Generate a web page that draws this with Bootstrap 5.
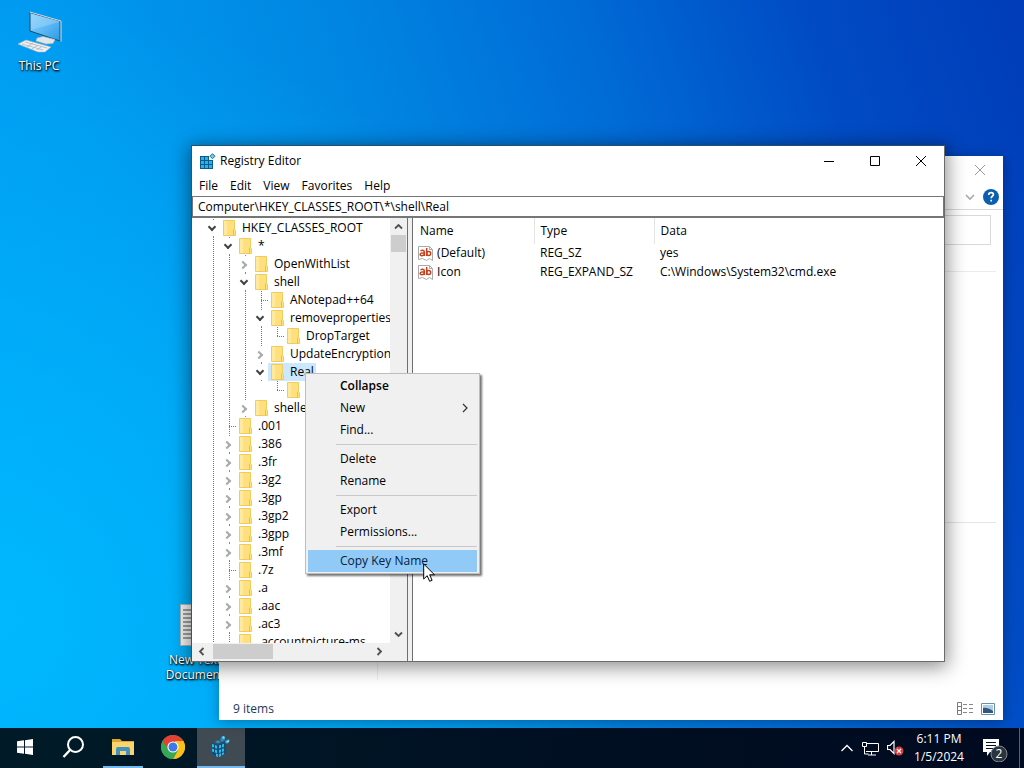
<!DOCTYPE html>
<html lang="en">
<head>
<meta charset="utf-8">
<meta name="viewport" content="width=device-width, initial-scale=1">
<title>Registry Editor</title>
<link href="https://cdn.jsdelivr.net/npm/bootstrap@5.3.0/dist/css/bootstrap.min.css" rel="stylesheet">
<style>
body{font:12px/18px "Open Sans","Noto Sans",sans-serif;color:#000;cursor:default}
button,input,table{font:inherit}
.desktop{background:
  radial-gradient(ellipse 62% 85% at 0% 85%,rgba(0,190,255,.8),rgba(0,180,255,0)),
  linear-gradient(72deg,#00a2f8 0%,#009af0 22%,#0086e2 45%,#006cd6 64%,#004cc4 82%,#003cb8 100%)}
.flatbtn{border:0;background:none;padding:0;color:inherit;display:flex;align-items:center;justify-content:center}
.shortcut{width:76px;color:#fff;text-shadow:0 1px 2px #000,1px 1px 2px #000;text-align:center;line-height:15px;text-decoration:none;display:flex;flex-direction:column;align-items:center;position:absolute}
.shortcut-pc{left:1px;top:10px}
.shortcut-doc{left:157px;top:602px}
.win{position:absolute;background:#fff;display:flex;flex-direction:column}
.win-explorer{left:219px;right:21px;top:156px;bottom:8px;box-shadow:0 2px 12px rgba(0,0,0,.3)}
.win-regedit{left:191px;right:79px;top:145px;bottom:66px;border:1px solid #6b6b6b;border-top-color:#24506f;border-left-color:#1c5a8a;box-shadow:0 3px 18px 2px rgba(0,0,0,.45)}
.ex-ribbon{height:26px;border-bottom:1px solid #d9d9d9}
.ex-address{height:62px;border-bottom:1px solid #ebebeb;margin-right:7px}
.ex-address input{width:180px;height:30px;border:1px solid #d9d9d9;margin:5px 5px 0 0;outline:0}
.ex-files{height:251px;border-bottom:1px solid #e5e5e5;margin-right:7px}
.ex-nav{width:159px;border-right:1px solid #f0f0f0}
.ex-status{height:24px;color:#1e395b;padding:1px 8px 0 14px}
.titlebar{height:28px}
.win-regedit .titlebar{height:30px}
.caption-btn{width:46px;height:28px}
.menubar{height:21px;padding-left:1px}
.menubar .flatbtn{padding:0 6px}
.addressbar{height:22px;border:2px solid #767676;border-width:1px 1px 2px;padding:0 5px;outline:0;width:100%}
.tree-pane{width:215px;background:#f0f0f0}
.tree{width:198px;background:#fff;overflow:hidden;list-style:none;margin:0;padding:1px 0 0 12px}
.tree li{display:flex;height:18px;white-space:nowrap}
.tree li>i{flex:none;width:16px;height:18px;position:relative}
.line{background:repeating-linear-gradient(#777 0 1px,transparent 1px 2px) 9px 0/1px 18px no-repeat}
.tee{background:repeating-linear-gradient(#777 0 1px,transparent 1px 2px) 9px 0/1px 18px no-repeat,repeating-linear-gradient(90deg,#777 0 1px,transparent 1px 2px) 9px 9px/7px 1px no-repeat}
.elbow{background:repeating-linear-gradient(#777 0 1px,transparent 1px 2px) 9px 0/1px 10px no-repeat,repeating-linear-gradient(90deg,#777 0 1px,transparent 1px 2px) 9px 9px/7px 1px no-repeat}
.opened,.closed{background:linear-gradient(#888,#888) 9px 0/1px 1px no-repeat,linear-gradient(#888,#888) 9px 17px/1px 1px no-repeat}
.opened::after,.closed::after{content:"";position:absolute;width:6px;height:6px;border:solid #444;border-width:0 2px 2px 0}
.opened::after{left:5px;top:5px;transform:rotate(45deg)}
.closed::after{left:4px;top:7px;transform:rotate(-45deg);border-color:#a8a8a8}
.key{display:flex;padding-right:2px}
.key svg{flex:none;width:16px;height:18px;margin-right:6px}
.key.picked{background:#cce8ff}
.vscroll{width:17px}
.vscroll .thumb{width:15px;height:17px;background:#cdcdcd}
.hscroll{height:17px;margin-bottom:1px}
.hscroll .thumb{width:60px;height:15px;background:#cdcdcd}
.arrow{width:17px;height:17px;flex:none}
.splitter{width:6px;background:#f0f0f0;border:solid #6f6f6f;border-width:0 1px}
.values{table-layout:fixed;width:100%}
.values th{font-weight:400;height:26px;padding:0 6px;border-right:1px solid #e5e5e5}
.values th:first-child{padding-left:7px}
.values th:last-child{border:0}
.values td{height:19px;padding:0 6px;white-space:nowrap}
.values td:first-child{padding-left:5px}
.ctx{position:absolute;left:113px;top:227px;width:175px;background:#f0f0f0;border:1px solid #bdbdbd;padding:1px 2px;box-shadow:2px 2px 2px rgba(0,0,0,.55)}
.ctx .entry{width:100%;height:22px;padding:0 6px 0 32px;justify-content:space-between}
.ctx hr{margin:3px 0 3px 28px;border-top:1px solid #c9c9c9;opacity:1}
.ctx .entry.hot{background:#91c9f7;color:#04213e}
.pointer{position:absolute;left:117px;top:189px}
.taskbar{height:40px;background:linear-gradient(90deg,#001b28,#000f22 60%,#000a20);color:#fff}
.task{width:49px;height:40px;border-bottom:2px solid transparent}
.task.running{width:40px;margin:0 5px;border-color:#76b9ed}
.task.current{width:48px;background:#404a53;border-color:#76b9ed}
.clock{width:54px;text-align:center}
.peek{width:5px;height:40px;border-left:1px solid #56606c;margin-left:10px}
</style>
</head>
<body>
<svg width="0" height="0" class="position-absolute" aria-hidden="true">
 <symbol id="folder" viewBox="0 0 16 18"><path d="M3.500 1.500h11v9l1 1v5h-12z" fill="#ffe07c" stroke="#f0cc5c"/><path d="M13.500 10.500v6" stroke="#e8c04a" fill="none"/><path d="M4 2h3v14H4z" fill="#ffe99c"/></symbol>
 <symbol id="textvalue" viewBox="0 0 16 17"><path d="M.5 1.500h11l3 3v11l-3-2-3 2-4-2-4 1z" fill="#fff" stroke="#aaa"/><path d="M11.500 1.500v3h3" fill="none" stroke="#aaa"/><g fill="none" stroke="#c8401d" stroke-width="1.500"><path d="M2.500 5.700q3.800-1.200 3.800 1.300v4M6.300 8Q2.200 7.500 2.200 9.400c0 2 3 1.700 4.100 0M8.700 3v8"/><circle cx="10.700" cy="8.500" r="2"/></g></symbol>
 <symbol id="up" viewBox="0 0 17 17"><path d="M5 10.500 8.500 7 12 10.500" fill="none" stroke="#505050" stroke-width="1.800"/></symbol>
 <symbol id="down" viewBox="0 0 17 17"><path d="M5 6.500 8.500 10 12 6.500" fill="none" stroke="#505050" stroke-width="1.800"/></symbol>
 <symbol id="left" viewBox="0 0 17 17"><path d="M11.500 5 8 8.500l3.500 3.500" fill="none" stroke="#505050" stroke-width="1.800"/></symbol>
 <symbol id="right" viewBox="0 0 17 17"><path d="M7.500 5 11 8.500 7.500 12" fill="none" stroke="#505050" stroke-width="1.800"/></symbol>
</svg>
<div class="vh-100 d-flex flex-column overflow-hidden">
<main class="desktop flex-grow-1 position-relative">
 <a href="#" class="shortcut shortcut-pc">
  <svg width="46" height="48" viewBox="0 0 46 48"><defs><linearGradient id="scr" x2="1" y2="1"><stop stop-color="#8ad1fb"/><stop offset=".5" stop-color="#61b9f4"/><stop offset="1" stop-color="#289be9"/></linearGradient></defs><path d="M14 2.500 44 11v20L14 21z" fill="url(#scr)" stroke="#234b6b"/><path d="M14 2 45 11v20.500" fill="none" stroke="#d4dde2"/><path d="m15 20 28-8v-1L15 4z" fill="#b4e1fd" opacity=".35"/><path d="m21 28 6-1.500 12 3-2 4-7 .5-10-3z" fill="#dfe7ea" stroke="#a2b3bd" stroke-width=".6"/><path d="m2 34 8-4 25 7-6 5-7 0z" fill="#eef1f2" stroke="#aab6bf" stroke-width=".6"/><path d="m6 34 21 6m-18-8 22 6M11 37l6-4m-1 6 6-4m-1 5 5-4" stroke="#aab4ba" stroke-width=".8"/></svg>
  <span>This PC</span></a>
 <a href="#" class="shortcut shortcut-doc">
  <svg width="34" height="50" viewBox="0 0 34 50"><path d="M2.500 2.500h27v41h-27z" fill="#f6f6f6" stroke="#b5b5b5"/><path d="M5 8h21M5 12h21M5 16h21M5 20h21M5 24h21M5 28h21M5 32h21M5 36h21" stroke="#858585" stroke-width="1.300"/></svg>
  <span>New Text Document</span></a>

 <section class="win win-explorer" aria-label="File Explorer">
  <div class="titlebar d-flex justify-content-end"><button class="flatbtn caption-btn" aria-label="Close folder"><svg width="12" height="12"><path d="m1 1 10 10M11 1 1 11" stroke="#999"/></svg></button></div>
  <div class="ex-ribbon d-flex justify-content-end align-items-center pe-1 gap-2">
   <button class="flatbtn" aria-label="Expand ribbon"><svg width="10" height="8"><path d="m1 2 4 4 4-4" fill="none" stroke="#aaa" stroke-width="1.600"/></svg></button>
   <button class="flatbtn" aria-label="Help"><svg width="16" height="16" viewBox="0 0 16 16"><circle cx="8" cy="8" r="8" fill="#0c5fae"/><path d="M5.700 6Q5.800 3.700 8.100 3.700q2.300 0 2.300 1.900c0 1.600-2.200 1.700-2.200 3.700M8.200 10.700v1.800" fill="none" stroke="#fff" stroke-width="1.700"/></svg></button>
  </div>
  <div class="ex-address d-flex justify-content-end"><input type="text" aria-label="Search folder"></div>
  <div class="ex-files"></div>
  <div class="flex-grow-1 d-flex flex-column"><div class="ex-nav flex-grow-1 mb-3"></div></div>
  <div class="ex-status d-flex align-items-center justify-content-between"><span>9 items</span>
   <span class="d-flex gap-2"><button class="flatbtn" aria-label="Details view"><svg width="16" height="13"><path d="M.5.500h4v12h-4zM1 4.500h3M1 8.500h3" fill="none" stroke="#7c7c7c"/><path d="M6 2.500h10M6 6.500h10M6 10.500h10" stroke="#888" stroke-dasharray="4 2"/></svg></button>
   <button class="flatbtn" aria-label="Large icons view"><svg width="14" height="12"><path d="M.5.500h13v11H.500z" fill="#fff" stroke="#6a8fab"/><path d="M2 2h10v8H2z" fill="#a8d0ec"/><path d="M2 5q4-1 10 3v2H2z" fill="#31587a"/></svg></button></span>
  </div>
 </section>

 <section class="win win-regedit" aria-label="Registry Editor">
  <header class="titlebar d-flex align-items-center ps-2">
   <svg width="16" height="16" viewBox="0 0 16 16"><path d="M0 3h13v13H0z" fill="#0b5c8c"/><path d="M1 4h3v3H1zM5 4h3v3H5zM1 8h3v3H1zM5 8h3v3H5zM9 8h3v3H9zM1 12h3v3H1zM5 12h3v3H5zM9 12h3v3H9z" fill="#27b4e8"/><path d="M9 3h4v4H9z" fill="#fff"/><path d="m12.500.700 2.500 2.500-2.500 2.500L10 3.200z" fill="#68cdf0" stroke="#18719f"/></svg>
   <span class="flex-grow-1 ps-1">Registry Editor</span>
   <button class="flatbtn caption-btn" aria-label="Minimize"><svg width="12" height="12"><path d="M1 6.500h10" stroke="#000"/></svg></button>
   <button class="flatbtn caption-btn" aria-label="Maximize"><svg width="12" height="12"><path d="M1.500 1.500h9v9h-9z" fill="none" stroke="#000"/></svg></button>
   <button class="flatbtn caption-btn" aria-label="Close"><svg width="12" height="12"><path d="m1 1 10 10M11 1 1 11" stroke="#000"/></svg></button>
  </header>
  <nav class="menubar d-flex"><button class="flatbtn">File</button><button class="flatbtn">Edit</button><button class="flatbtn">View</button><button class="flatbtn">Favorites</button><button class="flatbtn">Help</button></nav>
  <input class="addressbar" type="text" aria-label="Key path" value="Computer\HKEY_CLASSES_ROOT\*\shell\Real">
  <div class="flex-grow-1 d-flex overflow-hidden">
   <div class="tree-pane d-flex flex-column flex-shrink-0 overflow-hidden">
    <div class="flex-grow-1 d-flex overflow-hidden">
     <ul class="tree">
      <li><i class="opened"></i><span class="key"><svg><use href="#folder"/></svg>HKEY_CLASSES_ROOT</span></li>
      <li><i class="line"></i><i class="opened"></i><span class="key"><svg><use href="#folder"/></svg>*</span></li>
      <li><i class="line"></i><i class="line"></i><i class="closed"></i><span class="key"><svg><use href="#folder"/></svg>OpenWithList</span></li>
      <li><i class="line"></i><i class="line"></i><i class="opened"></i><span class="key"><svg><use href="#folder"/></svg>shell</span></li>
      <li><i class="line"></i><i class="line"></i><i class="line"></i><i class="tee"></i><span class="key"><svg><use href="#folder"/></svg>ANotepad++64</span></li>
      <li><i class="line"></i><i class="line"></i><i class="line"></i><i class="opened"></i><span class="key"><svg><use href="#folder"/></svg>removeproperties</span></li>
      <li><i class="line"></i><i class="line"></i><i class="line"></i><i class="line"></i><i class="elbow"></i><span class="key"><svg><use href="#folder"/></svg>DropTarget</span></li>
      <li><i class="line"></i><i class="line"></i><i class="line"></i><i class="closed"></i><span class="key"><svg><use href="#folder"/></svg>UpdateEncryptionS</span></li>
      <li><i class="line"></i><i class="line"></i><i class="line"></i><i class="opened"></i><span class="key picked"><svg><use href="#folder"/></svg>Real</span></li>
      <li><i class="line"></i><i class="line"></i><i class="line"></i><i></i><i class="elbow"></i><span class="key"><svg><use href="#folder"/></svg></span></li>
      <li><i class="line"></i><i class="line"></i><i class="closed"></i><span class="key"><svg><use href="#folder"/></svg>shellex</span></li>
      <li><i class="line"></i><i class="tee"></i><span class="key"><svg><use href="#folder"/></svg>.001</span></li>
      <li><i class="line"></i><i class="closed"></i><span class="key"><svg><use href="#folder"/></svg>.386</span></li>
      <li><i class="line"></i><i class="closed"></i><span class="key"><svg><use href="#folder"/></svg>.3fr</span></li>
      <li><i class="line"></i><i class="closed"></i><span class="key"><svg><use href="#folder"/></svg>.3g2</span></li>
      <li><i class="line"></i><i class="closed"></i><span class="key"><svg><use href="#folder"/></svg>.3gp</span></li>
      <li><i class="line"></i><i class="closed"></i><span class="key"><svg><use href="#folder"/></svg>.3gp2</span></li>
      <li><i class="line"></i><i class="closed"></i><span class="key"><svg><use href="#folder"/></svg>.3gpp</span></li>
      <li><i class="line"></i><i class="closed"></i><span class="key"><svg><use href="#folder"/></svg>.3mf</span></li>
      <li><i class="line"></i><i class="tee"></i><span class="key"><svg><use href="#folder"/></svg>.7z</span></li>
      <li><i class="line"></i><i class="closed"></i><span class="key"><svg><use href="#folder"/></svg>.a</span></li>
      <li><i class="line"></i><i class="closed"></i><span class="key"><svg><use href="#folder"/></svg>.aac</span></li>
      <li><i class="line"></i><i class="closed"></i><span class="key"><svg><use href="#folder"/></svg>.ac3</span></li>
      <li><i class="line"></i><i class="line"></i><span class="key"><svg><use href="#folder"/></svg>.accountpicture-ms</span></li>
     </ul>
     <div class="vscroll d-flex flex-column align-items-center"><svg class="arrow"><use href="#up"/></svg><div class="thumb"></div><svg class="arrow mt-auto"><use href="#down"/></svg></div>
    </div>
    <div class="hscroll d-flex align-items-center pe-3"><svg class="arrow"><use href="#left"/></svg><div class="thumb ms-1"></div><svg class="arrow ms-auto me-1"><use href="#right"/></svg></div>
   </div>
   <div class="splitter flex-shrink-0"></div>
   <div class="flex-grow-1 overflow-hidden">
    <table class="values">
     <colgroup><col style="width:121px"><col style="width:120px"><col></colgroup>
     <thead><tr><th scope="col">Name</th><th scope="col">Type</th><th scope="col">Data</th></tr></thead>
     <tbody>
      <tr><td><svg width="16" height="17"><use href="#textvalue"/></svg> (Default)</td><td>REG_SZ</td><td>yes</td></tr>
      <tr><td><svg width="16" height="17"><use href="#textvalue"/></svg> Icon</td><td>REG_EXPAND_SZ</td><td>C:\Windows\System32\cmd.exe</td></tr>
     </tbody>
    </table>
   </div>
  </div>
  <div class="ctx" role="menu">
   <button class="flatbtn entry fw-semibold" role="menuitem">Collapse</button>
   <button class="flatbtn entry" role="menuitem">New<svg width="12" height="12"><path d="m4 2 4 4-4 4" fill="none" stroke="#333" stroke-width="1.200"/></svg></button>
   <button class="flatbtn entry" role="menuitem">Find...</button>
   <hr>
   <button class="flatbtn entry" role="menuitem">Delete</button>
   <button class="flatbtn entry" role="menuitem">Rename</button>
   <hr>
   <button class="flatbtn entry" role="menuitem">Export</button>
   <button class="flatbtn entry" role="menuitem">Permissions...</button>
   <hr>
   <button class="flatbtn entry hot" role="menuitem">Copy Key Name</button>
   <svg class="pointer" width="13" height="20" viewBox="0 0 13 20"><path d="M.7 1v15l3.500-3.300 2.400 5.600 2.500-1-2.400-5.500h4.800z" fill="#fff" stroke="#000"/></svg>
  </div>
 </section>
</main>

<footer class="taskbar d-flex align-items-center flex-shrink-0">
 <button class="flatbtn task" aria-label="Start"><svg width="16" height="16"><path d="M0 2.300 7 1.300v6.200H0zM8 1.200 16 0v7.500H8zM0 8.500h7v6.200l-7-1zM8 8.500h8V16l-8-1.200z" fill="#fff"/></svg></button>
 <button class="flatbtn task" aria-label="Search"><svg width="24" height="24"><circle cx="13.500" cy="9.500" r="7.500" fill="none" stroke="#fff" stroke-width="2"/><path d="m8 15-6.500 7" stroke="#fff" stroke-width="2.400"/></svg></button>
 <button class="flatbtn task running" aria-label="File Explorer"><svg width="22" height="20"><path d="M0 2h8l2 2h12v14H0z" fill="#dfa52f"/><path d="M0 5h22v13H0z" fill="#fbd56c"/><path d="M4 18v-6q0-2 2-2h10q2 0 2 2v6h-4v-4H8v4z" fill="#3f92c4"/></svg></button>
 <button class="flatbtn task" aria-label="Chrome"><svg width="24" height="24" viewBox="0 0 24 24"><circle cx="12" cy="12" r="12" fill="#35a853"/><path d="M1.600 6A12 12 0 0 1 22.400 6L17 12H7.500z" fill="#e34133"/><path d="M22.400 6A12 12 0 0 1 12 24l5-9-3-9z" fill="#fbc116"/><path d="M1.600 6 7.500 15 12 12V6z" fill="#e34133"/><path d="M1.600 6 6.800 15l5.200 2.500L17 15 12 24A12 12 0 0 1 1.600 6z" fill="#35a853"/><circle cx="12" cy="12" r="5.600" fill="#fff"/><circle cx="12" cy="12" r="4.500" fill="#3c79ea"/></svg></button>
 <button class="flatbtn task current" aria-label="Registry Editor"><svg width="20" height="24" viewBox="0 0 20 24"><path d="m1 8 6 2v12l-6-3zM7 10l8-3v11l-8 4z" fill="#0c4f77"/><path d="m1 9 2 .600v3L1 12zM4 10l2 .700v3L4 13zM1 13.500l2 .700v3L1 16.500zM4 14.500l2 .700v3L4 17.500zM8 10.500l2-.700v3l-2 .700zM11 9.400l2-.700v3l-2 .700zM8 15l2-.700v3L8 18zM11 14l2-.700v3l-2 .700zM5 18.500l2 .700v3l-2-1zM8 19l2-.700v3l-2 .700zM11 18l2-.700v2l-2 .900z" fill="#35b6ea"/><path d="M4 7l3-2 3 2-3 1.500zM9 5l2-4 3 1v3l-3 2zM14 6l4-2 1 2-3 3-2-1z" fill="#1f8fc7"/><path d="m11 2 2-1 1 2-2 1zM15 6l3-1v2l-2 1z" fill="#7bd6f6"/></svg></button>
 <div class="ms-auto d-flex align-items-center">
  <button class="flatbtn me-2" aria-label="Hidden icons"><svg width="14" height="10"><path d="m1.500 8 5.500-5.500L12.500 8" fill="none" stroke="#fff" stroke-width="1.300"/></svg></button>
  <button class="flatbtn me-2" aria-label="Network"><svg width="17" height="15"><path d="M4.500 2.500h12v8H4M9.500 11v3M6 14h8M.5 1.500h4v4h-4zM2.500 6v7h4" fill="none" stroke="#fff"/></svg></button>
  <button class="flatbtn me-2" aria-label="Volume muted"><svg width="17" height="16"><path d="M.5 5.500h2.500l4-4v12l-4-4H.5z" fill="none" stroke="#fff" stroke-width="1.200"/><circle cx="12" cy="11" r="4.500" fill="#d83b3b"/><path d="m10 9 4 4m0-4-4 4" stroke="#fff" stroke-width="1.200"/></svg></button>
  <div class="clock"><div>6:11 PM</div><div>1/5/2024</div></div>
  <button class="flatbtn ms-3" aria-label="Notifications, 2 new"><svg width="27" height="28" viewBox="0 0 27 28"><path d="M1 5h16v13H8l-3 4v-4H1z" fill="#fff"/><path d="M4 8.500h10M4 11.500h10M4 14.500h7" stroke="#061324"/><circle cx="17" cy="20" r="8" fill="#2b333d" stroke="#808890"/><text x="17" y="24" text-anchor="middle" font-size="12" fill="#fff">2</text></svg></button>
  <div class="peek"></div>
 </div>
</footer>
</div>
<script src="https://cdn.jsdelivr.net/npm/bootstrap@5.3.0/dist/js/bootstrap.bundle.min.js"></script>
</body>
</html>
